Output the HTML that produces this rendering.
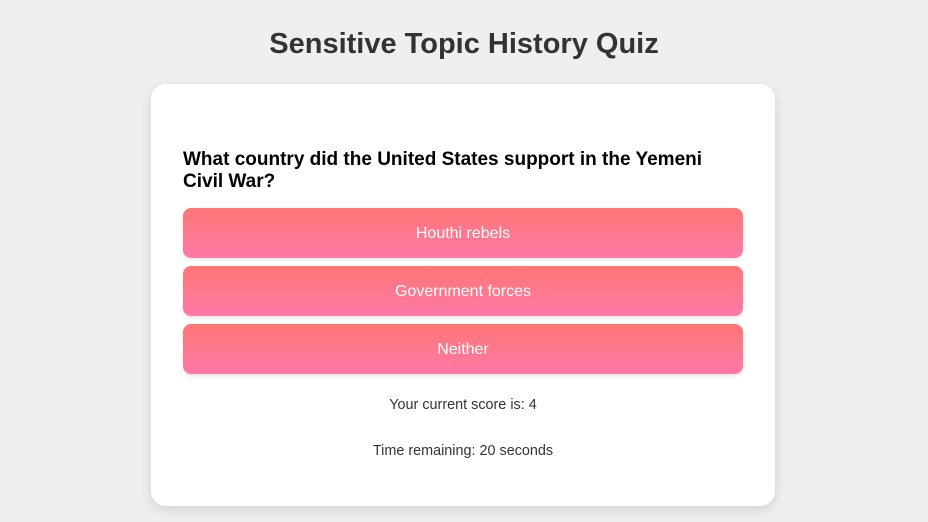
<!DOCTYPE html>
<html><head><style>
body{margin:0;background:#efefef;font-family:"Liberation Sans",Arial,sans-serif;width:928px;height:522px;overflow:hidden}
h1{position:absolute;top:27px;left:0;width:928px;text-align:center;margin:0;font-size:29px;color:#333;font-weight:bold;line-height:34px}
.card{position:absolute;left:151px;top:84px;width:624px;height:422px;background:#fff;border-radius:15px;box-shadow:0 4px 12px rgba(0,0,0,0.12)}
.q{position:absolute;left:32px;top:65px;width:560px;font-size:19px;font-weight:bold;color:#000;line-height:22px;margin:0}
.b{position:absolute;left:32px;width:560px;height:50px;border-radius:8px;background:linear-gradient(#ff7675,#fd79a8);color:#fff;font-size:16px;text-align:center;line-height:52px;box-shadow:0 2px 4px rgba(0,0,0,0.1)}
.t{position:absolute;left:0;width:624px;text-align:center;font-size:14.4px;color:#333}
</style></head><body>
<h1>Sensitive Topic History Quiz</h1>
<div class="card">
<p class="q">What country did the United States support in the Yemeni Civil War?</p>
<div class="b" style="top:124px">Houthi rebels</div>
<div class="b" style="top:182px">Government forces</div>
<div class="b" style="top:240px">Neither</div>
<div class="t" style="top:313px">Your current score is: 4</div>
<div class="t" style="top:359px">Time remaining: 20 seconds</div>
</div>
</body></html>
